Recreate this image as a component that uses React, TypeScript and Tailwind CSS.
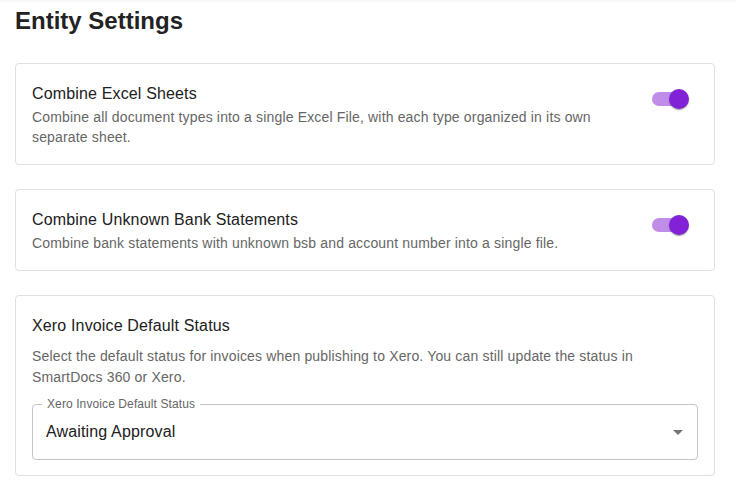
import React from "react";

function Toggle() {
  return (
    <div className="relative w-[58px] h-[38px] shrink-0">
      <div className="absolute left-[12px] top-[12px] w-[34px] h-[14px] rounded-full bg-[#c08ee9]" />
      <div className="absolute left-[29px] top-[9px] w-[20px] h-[20px] rounded-full bg-[#8122d6] shadow-[0_2px_1px_-1px_rgba(0,0,0,0.2),0_1px_1px_0_rgba(0,0,0,0.14),0_1px_3px_0_rgba(0,0,0,0.12)]" />
    </div>
  );
}

function SwitchCard({ title, desc }: { title: string; desc: string }) {
  return (
    <div className="border border-[#e0e0e0] rounded-[4px] bg-white px-4 pt-[17px] pb-[17px] flex items-start">
      <div className="flex-1 min-w-0 pr-2">
        <div className="text-[16px] leading-[26px] tracking-[0.15px] text-[#212121]">{title}</div>
        <div className="text-[14px] leading-[20px] tracking-[0.16px] text-[#666666]">{desc}</div>
      </div>
      <div className="-mt-[1px]">
        <Toggle />
      </div>
    </div>
  );
}

export default function App() {
  return (
    <div
      className="w-[736px] h-[497px] bg-white overflow-hidden"
      style={{ fontFamily: '"Liberation Sans", Arial, sans-serif' }}
    >
      <div className="h-[3px] bg-gradient-to-b from-[#f6f6f6] to-white" />
      <div className="ml-[15px] w-[700px]">
        <h1 className="mt-[3px] text-[24px] leading-[29px] font-bold text-[#222222]">
          Entity Settings
        </h1>
        <div className="mt-[28px] flex flex-col gap-6">
          <SwitchCard
            title="Combine Excel Sheets"
            desc="Combine all document types into a single Excel File, with each type organized in its own separate sheet."
          />
          <SwitchCard
            title="Combine Unknown Bank Statements"
            desc="Combine bank statements with unknown bsb and account number into a single file."
          />
          <div className="border border-[#e0e0e0] rounded-[4px] bg-white px-4 pt-[17px] pb-[15px]">
            <div className="text-[16px] leading-[26px] tracking-[0.15px] text-[#212121]">
              Xero Invoice Default Status
            </div>
            <div className="mt-[7px] text-[14px] leading-[21px] tracking-[0.16px] text-[#666666]">
              Select the default status for invoices when publishing to Xero. You can still update the status in SmartDocs 360 or Xero.
            </div>
            <div className="relative mt-[16px] h-[56px] border border-[#c4c4c4] rounded-[4px] flex items-center pl-[13px] pr-[7px]">
              <span className="absolute left-[9px] -top-[8px] px-[5px] bg-white text-[12px] leading-[14px] tracking-[0.1px] text-[#666666]">
                Xero Invoice Default Status
              </span>
              <span className="flex-1 text-[16px] tracking-[0.15px] text-[#212121]">Awaiting Approval</span>
              <svg width="24" height="24" viewBox="0 0 24 24" className="text-[#757575]">
                <path d="M7 10l5 5 5-5z" fill="currentColor" />
              </svg>
            </div>
          </div>
        </div>
      </div>
    </div>
  );
}
